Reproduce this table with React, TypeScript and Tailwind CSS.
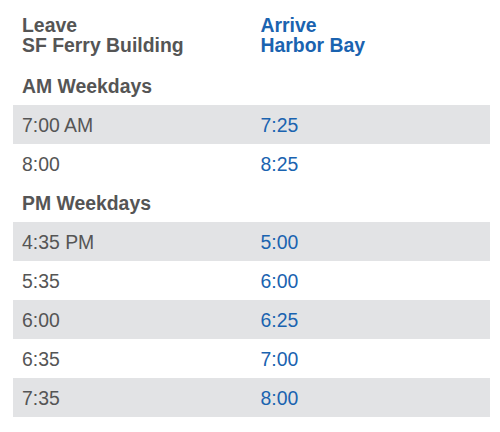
import React from 'react';

type Row = { leave: string; arrive: string };

const sections: { title: string; rows: Row[] }[] = [
  {
    title: 'AM Weekdays',
    rows: [
      { leave: '7:00 AM', arrive: '7:25' },
      { leave: '8:00', arrive: '8:25' },
    ],
  },
  {
    title: 'PM Weekdays',
    rows: [
      { leave: '4:35 PM', arrive: '5:00' },
      { leave: '5:35', arrive: '6:00' },
      { leave: '6:00', arrive: '6:25' },
      { leave: '6:35', arrive: '7:00' },
      { leave: '7:35', arrive: '8:00' },
    ],
  },
];

const App = () => {
  return (
    <div
      className="w-[500px] h-[432px] bg-white text-[19.4px] leading-[20px] text-[#555555]"
      style={{ fontFamily: '"Liberation Sans", Arial, sans-serif' }}
    >
      <div className="ml-[13px] w-[477px]">
        {/* Column headings */}
        <div className="grid grid-cols-2 h-[66px] pt-[15px] font-bold">
          <div className="px-[9px]">
            <div>Leave</div>
            <div>SF Ferry Building</div>
          </div>
          <div className="px-[9px] text-[#1a63b0]">
            <div>Arrive</div>
            <div>Harbor Bay</div>
          </div>
        </div>

        {sections.map((section) => (
          <div key={section.title}>
            <div className="h-[39px] flex items-center px-[9px] font-bold">{section.title}</div>
            {section.rows.map((row, i) => (
              <div
                key={row.leave}
                className={`grid grid-cols-2 h-[39px] items-center ${i % 2 === 0 ? 'bg-[#e2e3e5]' : 'bg-white'}`}
              >
                <div className="px-[9px]">{row.leave}</div>
                <div className="px-[9px] text-[#1a63b0]">{row.arrive}</div>
              </div>
            ))}
          </div>
        ))}
      </div>
    </div>
  );
};

export default App;
